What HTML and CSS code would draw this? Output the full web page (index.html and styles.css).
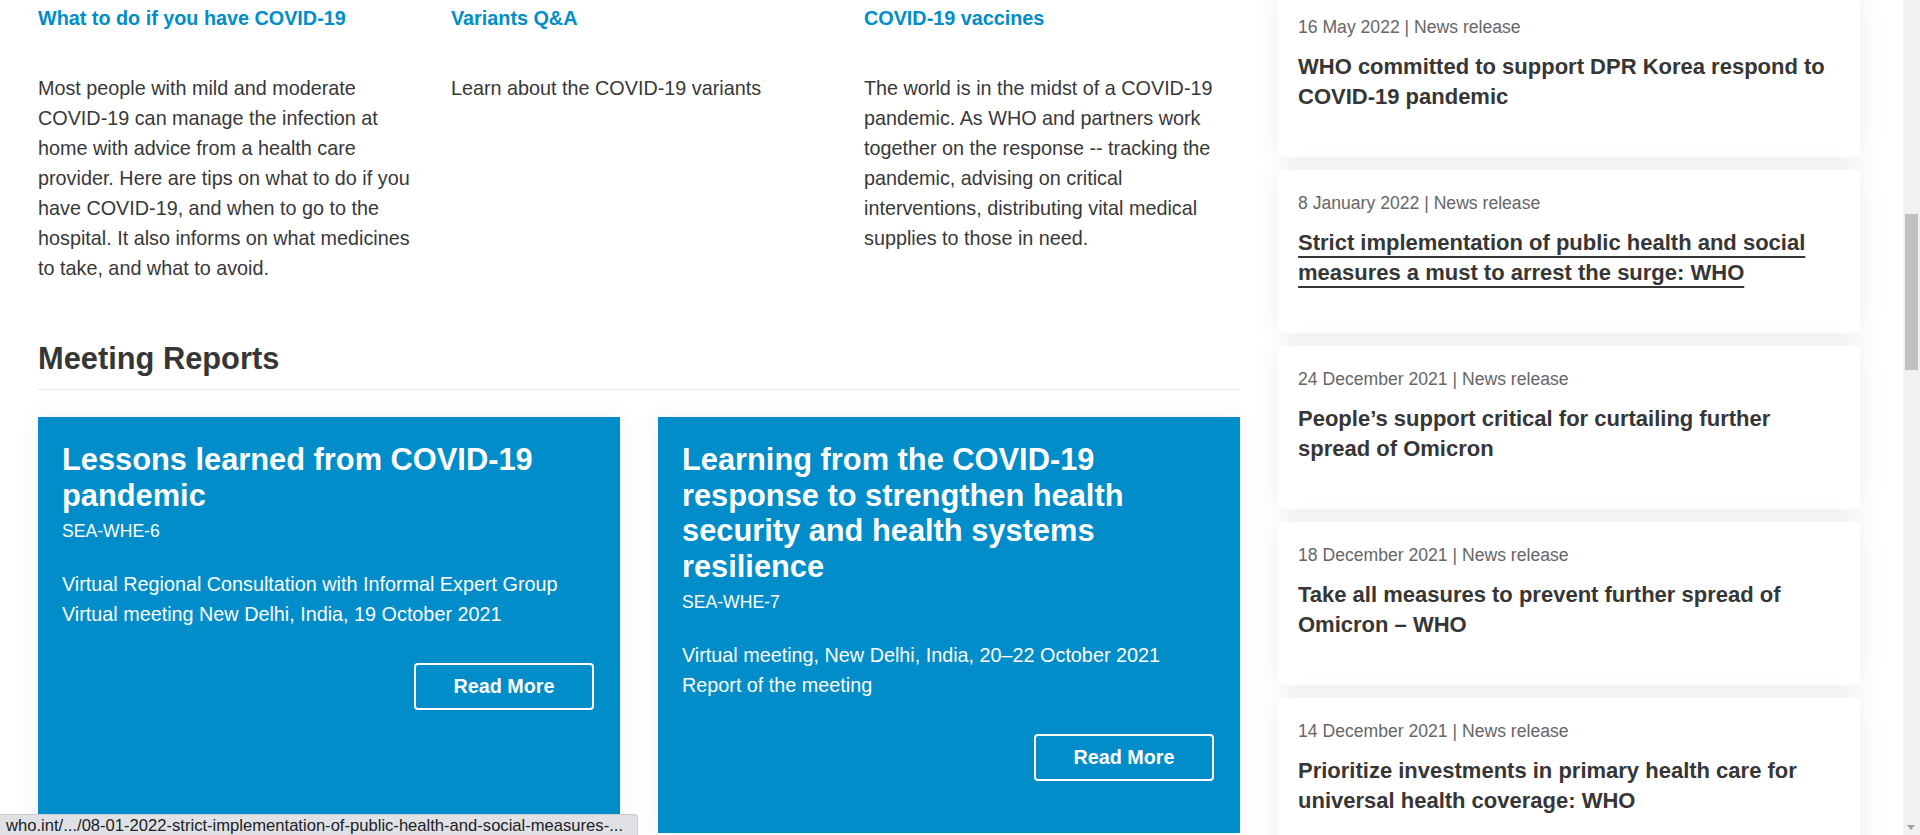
FILE: index.html
```html
<!DOCTYPE html>
<html lang="en">
<head>
<meta charset="utf-8">
<title>WHO SEARO – COVID-19</title>
<link rel="stylesheet" href="styles.css">
</head>
<body>
<div class="page">
  <main class="main">
    <section class="topics">
      <article class="topic">
        <h3 class="topic-title">What to do if you have COVID-19</h3>
        <p class="topic-text">Most people with mild and moderate COVID-19 can manage the infection at home with advice from a health care provider. Here are tips on what to do if you have COVID-19, and when to go to the hospital. It also informs on what medicines to take, and what to avoid.</p>
      </article>
      <article class="topic">
        <h3 class="topic-title">Variants Q&amp;A</h3>
        <p class="topic-text">Learn about the COVID-19 variants</p>
      </article>
      <article class="topic">
        <h3 class="topic-title">COVID-19 vaccines</h3>
        <p class="topic-text">The world is in the midst of a COVID-19 pandemic. As WHO and partners work together on the response -- tracking the pandemic, advising on critical interventions, distributing vital medical supplies to those in need.</p>
      </article>
    </section>

    <h2 class="section-title">Meeting Reports</h2>

    <section class="reports">
      <article class="report">
        <h3 class="report-title">Lessons learned from COVID-19 pandemic</h3>
        <p class="report-code">SEA-WHE-6</p>
        <p class="report-desc">Virtual Regional Consultation with Informal Expert Group<br>Virtual meeting New Delhi, India, 19 October 2021</p>
        <div class="report-actions"><a class="btn" href="#">Read More</a></div>
      </article>
      <article class="report">
        <h3 class="report-title">Learning from the COVID-19 response to strengthen health security and health systems resilience</h3>
        <p class="report-code">SEA-WHE-7</p>
        <p class="report-desc">Virtual meeting, New Delhi, India, 20–22 October 2021<br>Report of the meeting</p>
        <div class="report-actions"><a class="btn" href="#">Read More</a></div>
      </article>
    </section>
  </main>

  <aside class="news">
    <article class="news-card">
      <p class="news-meta">16 May 2022 | News release</p>
      <h4 class="news-title">WHO committed to support DPR Korea respond to COVID-19 pandemic</h4>
    </article>
    <article class="news-card">
      <p class="news-meta">8 January 2022 | News release</p>
      <h4 class="news-title"><a class="news-link hover" href="#">Strict implementation of public health and social measures a must to arrest the surge: WHO</a></h4>
    </article>
    <article class="news-card">
      <p class="news-meta">24 December 2021 | News release</p>
      <h4 class="news-title">People’s support critical for curtailing further spread of Omicron</h4>
    </article>
    <article class="news-card">
      <p class="news-meta">18 December 2021 | News release</p>
      <h4 class="news-title">Take all measures to prevent further spread of Omicron – WHO</h4>
    </article>
    <article class="news-card">
      <p class="news-meta">14 December 2021 | News release</p>
      <h4 class="news-title">Prioritize investments in primary health care for universal health coverage: WHO</h4>
    </article>
  </aside>
</div>

<div class="scrollbar" aria-hidden="true">
  <div class="scroll-thumb"></div>
  <div class="scroll-arrow"></div>
</div>

<div class="statusbar">who.int/.../08-01-2022-strict-implementation-of-public-health-and-social-measures-...</div>
</body>
</html>
```

FILE: styles.css
```css
* { box-sizing: border-box; }

html, body {
  margin: 0;
  padding: 0;
  background: #ffffff;
  overflow: hidden;
  height: 835px;
}

body {
  font-family: "Liberation Sans", Arial, sans-serif;
  color: #363636;
}

.page {
  display: flex;
  gap: 38px;
  padding-left: 38px;
  width: 1920px;
}

/* ---------- main column ---------- */
.main {
  width: 1202px;
  flex: none;
  padding-top: 3px;
}

.topics {
  display: grid;
  grid-template-columns: repeat(3, 1fr);
  column-gap: 37px;
}

.topic-title {
  margin: 0;
  font-size: 19.8px;
  line-height: 30px;
  font-weight: 700;
  color: #008dc9;
}

.topic-text {
  margin: 40px 0 0;
  font-size: 19.8px;
  line-height: 30px;
  color: #383838;
}

.section-title {
  margin: 58px 0 0;
  padding-bottom: 12px;
  border-bottom: 1px solid #e6e6e6;
  font-size: 30.8px;
  line-height: 36px;
  font-weight: 700;
  color: #363636;
}

.reports {
  display: grid;
  grid-template-columns: 1fr 1fr;
  column-gap: 38px;
  margin-top: 27px;
}

.report {
  background: #008dc9;
  color: #ffffff;
  padding: 25px 26px 52px 24px;
  box-shadow: 0 0 22px rgba(0, 0, 0, 0.06);
}

.report-title {
  margin: 0;
  font-size: 30.8px;
  line-height: 35.5px;
  font-weight: 700;
}

.report-code {
  margin: 6px 0 0;
  font-size: 17.6px;
  line-height: 24px;
}

.report-desc {
  margin: 27px 0 0;
  font-size: 19.8px;
  line-height: 29.5px;
}

.report-actions {
  display: flex;
  justify-content: flex-end;
  margin-top: 34px;
}

.btn {
  display: flex;
  align-items: center;
  justify-content: center;
  width: 180px;
  height: 47px;
  border: 2px solid #ffffff;
  border-radius: 4px;
  color: #ffffff;
  text-decoration: none;
  font-size: 19.8px;
  font-weight: 700;
}

/* ---------- news column ---------- */
.news {
  width: 582px;
  flex: none;
  display: flex;
  flex-direction: column;
  gap: 13px;
  margin-top: -6px;
}

.news-card {
  height: 163px;
  background: #ffffff;
  border-radius: 5px;
  padding: 20px 20px 0;
  box-shadow: 0 2px 28px rgba(0, 0, 0, 0.075);
}

.news-meta {
  margin: 0;
  font-size: 17.6px;
  line-height: 26px;
  color: #666666;
}

.news-title {
  margin: 12px 0 0;
  font-size: 22px;
  line-height: 30px;
  font-weight: 700;
  color: #363636;
}

.news-link {
  color: #363636;
  text-decoration: none;
}

.news-link.hover {
  text-decoration: underline;
  text-decoration-thickness: 2px;
  text-underline-offset: 6px;
}

/* ---------- browser chrome overlays ---------- */
.scrollbar {
  position: fixed;
  top: 0;
  right: 0;
  width: 17px;
  height: 835px;
  background: #f1f1f1;
}

.scroll-thumb {
  position: absolute;
  left: 2px;
  right: 2px;
  top: 214px;
  height: 156px;
  background: #c1c1c1;
}

.scroll-arrow {
  position: absolute;
  left: 4px;
  bottom: 5px;
  width: 0;
  height: 0;
  border-left: 4px solid transparent;
  border-right: 4px solid transparent;
  border-top: 5px solid #a3a3a3;
}

.statusbar {
  position: fixed;
  left: 0;
  bottom: 0;
  width: 638px;
  height: 21px;
  padding: 0 6px;
  background: #dfe1e5;
  border-top: 1px solid #c9ccd1;
  border-right: 1px solid #c9ccd1;
  border-top-right-radius: 4px;
  font-family: "Liberation Sans", Arial, sans-serif;
  font-size: 16.6px;
  line-height: 21px;
  color: #202124;
  white-space: nowrap;
  overflow: hidden;
}
```
